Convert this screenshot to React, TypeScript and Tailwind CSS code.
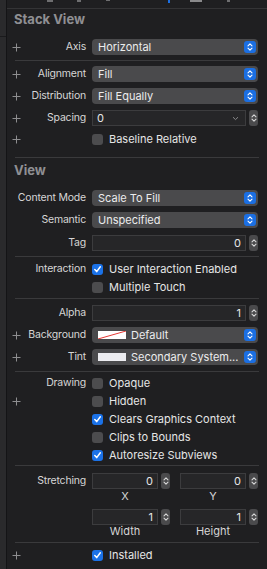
import type { ReactNode } from "react";

const FONT = { fontFamily: "Inter, 'Noto Sans', 'Liberation Sans', sans-serif" };

function Plus() {
  return (
    <svg width="9" height="9" viewBox="0 0 9 9" className="text-[#8e8e90]">
      <path d="M4.5 0.5v8M0.5 4.5h8" stroke="currentColor" strokeWidth="1" />
    </svg>
  );
}

function UpDown({ className = "" }: { className?: string }) {
  return (
    <svg width="6" height="10" viewBox="0 0 6 10" className={className}>
      <path d="M1 3.8L3 1.8L5 3.8M1 6.2L3 8.2L5 6.2" fill="none" stroke="currentColor" strokeWidth="1.1" strokeLinecap="round" strokeLinejoin="round" />
    </svg>
  );
}

function Row({ label, plus, h = "h-[22px]", className = "", children }: { label?: string; plus?: boolean; h?: string; className?: string; children?: ReactNode }) {
  return (
    <div className={`flex items-center ${h} ${className}`}>
      <div className="flex w-[18px] shrink-0 justify-center pl-[1px]">{plus && <Plus />}</div>
      <div className="flex w-[61px] shrink-0 justify-end whitespace-nowrap text-[10.5px] tracking-[-0.2px] text-[#d6d6d6]">{label}</div>
      <div className="ml-[6px] flex w-[166px] shrink-0 items-center">{children}</div>
    </div>
  );
}

function Popup({ children }: { children: ReactNode }) {
  return (
    <div className="flex h-[16px] w-full items-center rounded-[4px] bg-[#4a4a4c] pl-[6px] pr-[2px] text-[11px] text-[#ececec]">
      <div className="flex min-w-0 flex-1 items-center gap-[5px] truncate">{children}</div>
      <div className="flex h-[12px] w-[12px] items-center justify-center rounded-[3px] bg-[#1b6fe3] text-white">
        <UpDown />
      </div>
    </div>
  );
}

function Stepper() {
  return (
    <div className="ml-[3px] flex h-[16px] w-[9px] shrink-0 items-center justify-center rounded-[3px] bg-[#4a4a4c] text-[#d8d8d8]">
      <UpDown />
    </div>
  );
}

function Field({ value, left, chevron, w = "flex-1" }: { value: string; left?: boolean; chevron?: boolean; w?: string }) {
  return (
    <div className={`flex h-[16px] ${w} items-center border border-[#3c3c3e] bg-[#262628] px-[4px] text-[11px] text-[#e6e6e6] ${left ? "justify-between" : "justify-end"}`}>
      <span>{value}</span>
      {chevron && (
        <svg width="7" height="5" viewBox="0 0 7 5" className="mr-[2px] text-[#8a8a8c]">
          <path d="M1 1.2L3.5 3.6L6 1.2" fill="none" stroke="currentColor" strokeWidth="1" />
        </svg>
      )}
    </div>
  );
}

function Check({ on, label }: { on?: boolean; label: string }) {
  return (
    <div className="flex items-center gap-[6px]">
      {on ? (
        <div className="flex h-[11px] w-[11px] items-center justify-center rounded-[3px] bg-[#1b72e8]">
          <svg width="9" height="9" viewBox="0 0 9 9">
            <path d="M1.8 4.6L3.7 6.6L7.3 1.8" fill="none" stroke="white" strokeWidth="1.5" strokeLinecap="round" strokeLinejoin="round" />
          </svg>
        </div>
      ) : (
        <div className="h-[11px] w-[11px] rounded-[3px] bg-[#4c4c4e]" />
      )}
      <span className="text-[11px] text-[#e6e6e6]">{label}</span>
    </div>
  );
}

function Sep({ className = "" }: { className?: string }) {
  return <div className={`ml-[8px] mr-[8px] h-px bg-[#3a3a3c] ${className}`} />;
}

function Header({ title, className = "" }: { title: string; className?: string }) {
  return (
    <div className={`flex h-[22px] items-center pl-[7px] text-[13px] font-bold text-[#8f8f93] ${className}`}>{title}</div>
  );
}

function Swatch({ none }: { none?: boolean }) {
  return (
    <svg width="28" height="8" viewBox="0 0 28 8" className="shrink-0">
      <rect x="0" y="0" width="28" height="8" fill={none ? "#ffffff" : "#ececf0"} />
      {none && <path d="M0 8L28 0" stroke="#e53935" strokeWidth="1" />}
    </svg>
  );
}

export default function App() {
  return (
    <div className="flex h-[569px] w-[267px] overflow-hidden bg-[#1f1f21] select-none" style={FONT}>
      <div className="flex w-[7px] shrink-0 flex-col border-r border-[#141416] bg-[#2a2a2c]">
        <div className="h-[37px] border-b border-[#1a1a1c]" />
      </div>
      <div className="flex min-w-0 flex-1 flex-col">
        <div className="flex h-[9px] shrink-0 items-start border-b border-[#343436] pl-[40px]">
          <div className="mt-0 h-[2px] w-[6px] bg-[#6e6e70]" />
          <div className="ml-[24px] h-[2px] w-[4px] bg-[#6e6e70]" />
          <div className="ml-[25px] h-[1px] w-[4px] bg-[#6e6e70]" />
          <div className="ml-[58px] h-[3px] w-[2px] bg-[#1b6fe3]" />
          <div className="ml-[20px] h-[2px] w-[12px] bg-[#8a8a8c]" />
          <div className="ml-[25px] h-[2px] w-[3px] bg-[#6e6e70]" />
        </div>

        <Header title="Stack View" />
        <Row label="Axis" plus className="mt-[5px]"><Popup>Horizontal</Popup></Row>
        <Sep className="mt-[2px]" />
        <Row label="Alignment" plus className="mt-[2px]"><Popup>Fill</Popup></Row>
        <Row label="Distribution" plus><Popup>Fill Equally</Popup></Row>
        <Row label="Spacing" plus>
          <Field value="0" left chevron />
          <Stepper />
        </Row>
        <Row plus h="h-[18px]" className="mt-[1px]"><Check label="Baseline Relative" /></Row>
        <Sep className="mt-[9px]" />

        <Header title="View" className="mt-[2px]" />
        <Row label="Content Mode" className="mt-[5px]"><Popup>Scale To Fill</Popup></Row>
        <Row label="Semantic"><Popup>Unspecified</Popup></Row>
        <Row label="Tag" className="mt-[1px]">
          <Field value="0" />
          <Stepper />
        </Row>
        <Sep className="mt-[2px]" />
        <Row label="Interaction" h="h-[18px]" className="mt-[3px]"><Check on label="User Interaction Enabled" /></Row>
        <Row h="h-[18px]"><Check label="Multiple Touch" /></Row>
        <Sep className="mt-[2px]" />
        <Row label="Alpha" className="mt-[3px]">
          <Field value="1" />
          <Stepper />
        </Row>
        <Row label="Background" plus>
          <Popup><Swatch none /><span>Default</span></Popup>
        </Row>
        <Row label="Tint" plus>
          <Popup><Swatch /><span className="truncate">Secondary System...</span></Popup>
        </Row>
        <Sep className="mt-[3px]" />
        <Row label="Drawing" h="h-[18px]" className="mt-[2px]"><Check label="Opaque" /></Row>
        <Row plus h="h-[18px]"><Check label="Hidden" /></Row>
        <Row h="h-[18px]"><Check on label="Clears Graphics Context" /></Row>
        <Row h="h-[18px]"><Check label="Clips to Bounds" /></Row>
        <Row h="h-[18px]"><Check on label="Autoresize Subviews" /></Row>
        <Sep className="mt-[1px]" />

        <Row label="Stretching" h="h-[18px]" className="mt-[6px]">
          <div className="flex w-[78px] items-center">
            <Field value="0" />
            <Stepper />
          </div>
          <div className="ml-[10px] flex w-[78px] items-center">
            <Field value="0" />
            <Stepper />
          </div>
        </Row>
        <Row h="h-[12px]">
          <div className="w-[66px] text-center text-[11px] text-[#d6d6d6]">X</div>
          <div className="ml-[22px] w-[66px] text-center text-[11px] text-[#d6d6d6]">Y</div>
        </Row>
        <Row h="h-[16px]" className="mt-[7px]">
          <div className="flex w-[78px] items-center">
            <Field value="1" />
            <Stepper />
          </div>
          <div className="ml-[10px] flex w-[78px] items-center">
            <Field value="1" />
            <Stepper />
          </div>
        </Row>
        <Row h="h-[12px]">
          <div className="w-[66px] text-center text-[11px] text-[#d6d6d6]">Width</div>
          <div className="ml-[22px] w-[66px] text-center text-[11px] text-[#d6d6d6]">Height</div>
        </Row>
        <Sep className="mt-[5px]" />
        <Row plus h="h-[18px]" className="mt-[3px]"><Check on label="Installed" /></Row>
      </div>
    </div>
  );
}
